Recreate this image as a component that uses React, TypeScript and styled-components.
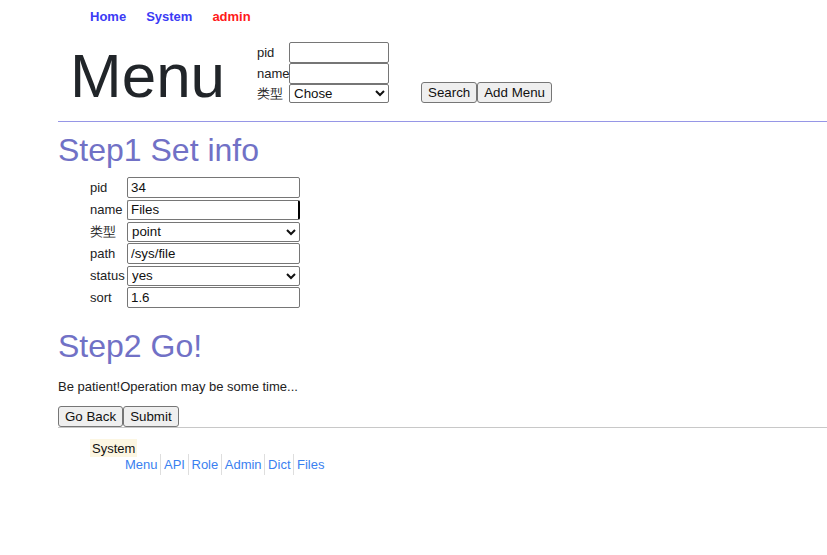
import React from "react";
import styled, { createGlobalStyle } from "styled-components";

const Global = createGlobalStyle`
  html, body { margin: 0; padding: 0; background: #fff; }
  body { font-family: "Liberation Sans", Arial, sans-serif; font-size: 13px; color: #222; }
`;

const Page = styled.div`
  padding-left: 58px;
`;

const Nav = styled.nav`
  display: flex;
  gap: 20px;
  padding: 9px 0 0 32px;
  height: 33px;
  box-sizing: border-box;
`;

const NavLink = styled.a<{ $red?: boolean }>`
  font-weight: bold;
  font-size: 13px;
  line-height: 15px;
  text-decoration: none;
  color: ${(p) => (p.$red ? "#ff1a1a" : "#3b3bf5")};
`;

const Header = styled.div`
  display: flex;
  align-items: flex-start;
  margin-top: 9px;
`;

const Title = styled.h1`
  width: 199px;
  box-sizing: border-box;
  margin: 3px 0 -8px;
  padding-left: 12px;
  font-size: 62px;
  line-height: 62px;
  font-weight: normal;
  color: #212529;
`;

const SearchForm = styled.div`
  display: grid;
  grid-template-columns: 32px 100px;
  grid-template-rows: 21px 21px 19px;
  align-items: center;
`;

const Label = styled.span`
  font-size: 13px;
  line-height: 15px;
  white-space: nowrap;
  color: #222;
`;

const Input = styled.input<{ $caret?: boolean }>`
  box-sizing: border-box;
  width: 100%;
  height: ${(p) => (p.$caret ? "20px" : "21px")};
  margin: 0;
  padding: 1px 3px;
  font-family: "Liberation Sans", Arial, sans-serif;
  font-size: 13.333px;
  color: #111;
  border: 1px solid #767676;
  border-right: ${(p) => (p.$caret ? "2px solid #000" : "1px solid #767676")};
  border-radius: 2px;
  background: #fff;
`;

const Select = styled.select<{ $h?: number }>`
  box-sizing: border-box;
  width: 100%;
  height: ${(p) => p.$h ?? 19}px;
  margin: 0;
  font-family: "Liberation Sans", Arial, sans-serif;
  font-size: 13.333px;
  color: #111;
  border: 1px solid #767676;
  border-radius: 2px;
  background: #fff;
`;

const ButtonGroup = styled.div`
  display: flex;
  margin: 40px 0 0 32px;
`;

const Button = styled.button`
  box-sizing: border-box;
  height: 21px;
  margin: 0;
  padding: 0 6px;
  font-family: "Liberation Sans", Arial, sans-serif;
  font-size: 13.333px;
  color: #111;
  background: #efefef;
  border: 1px solid #767676;
  border-radius: 3px;
`;

const Rule = styled.hr<{ $color: string; $top?: number }>`
  margin: ${(p) => p.$top ?? 0}px 0 0;
  border: 0;
  border-top: 1px solid ${(p) => p.$color};
  height: 0;
`;

const StepTitle = styled.h2<{ $top: number }>`
  margin: ${(p) => p.$top}px 0 0;
  font-size: 32px;
  line-height: 1.15;
  font-weight: normal;
  color: #7171c6;
`;

const InfoForm = styled.div`
  display: grid;
  grid-template-columns: 37px 173px;
  grid-auto-rows: 22px;
  align-items: center;
  margin: 8px 0 0 32px;
`;

const Note = styled.p`
  margin: 14px 0 0;
  font-size: 13px;
  line-height: 15px;
`;

const Actions = styled.div`
  display: flex;
  margin-top: 12px;
`;

const Footer = styled.div`
  padding: 11px 0 0 32px;
`;

const Group = styled.span`
  display: inline-block;
  background: #fcf6e2;
  padding: 2px 2px 1px;
  font-size: 13px;
  line-height: 15px;
  color: #111;
`;

const Links = styled.div`
  display: flex;
  margin-left: 32px;
  margin-top: -3px;
`;

const SubLink = styled.a<{ $first?: boolean }>`
  display: block;
  padding: 0 2.5px 0 3px;
  height: 21px;
  line-height: 21px;
  font-size: 13px;
  text-decoration: none;
  color: #3a7ff0;
  border-left: ${(p) => (p.$first ? "none" : "1px solid #dedede")};
`;

const rows: { label: string; value: string; select?: boolean; caret?: boolean }[] = [
  { label: "pid", value: "34" },
  { label: "name", value: "Files", caret: true },
  { label: "类型", value: "point", select: true },
  { label: "path", value: "/sys/file" },
  { label: "status", value: "yes", select: true },
  { label: "sort", value: "1.6" },
];

const subLinks = ["Menu", "API", "Role", "Admin", "Dict", "Files"];

export default function App() {
  return (
    <Page>
      <Global />
      <Nav>
        <NavLink>Home</NavLink>
        <NavLink>System</NavLink>
        <NavLink $red>admin</NavLink>
      </Nav>
      <Header>
        <Title>Menu</Title>
        <SearchForm>
          <Label>pid</Label>
          <Input defaultValue="" />
          <Label>name</Label>
          <Input defaultValue="" />
          <Label>类型</Label>
          <Select defaultValue="Chose">
            <option>Chose</option>
          </Select>
        </SearchForm>
        <ButtonGroup>
          <Button>Search</Button>
          <Button>Add Menu</Button>
        </ButtonGroup>
      </Header>
      <Rule $color="#9696e6" $top={18} />
      <StepTitle $top={10}>Step1 Set info</StepTitle>
      <InfoForm>
        {rows.map((r) => (
          <React.Fragment key={r.label}>
            <Label>{r.label}</Label>
            {r.select ? (
              <Select $h={20} defaultValue={r.value}>
                <option>{r.value}</option>
              </Select>
            ) : (
              <Input $caret={r.caret} defaultValue={r.value} />
            )}
          </React.Fragment>
        ))}
      </InfoForm>
      <StepTitle $top={19}>Step2 Go!</StepTitle>
      <Note>Be patient!Operation may be some time...</Note>
      <Actions>
        <Button>Go Back</Button>
        <Button>Submit</Button>
      </Actions>
      <Rule $color="#c8c8c8" />
      <Footer>
        <Group>System</Group>
        <Links>
          {subLinks.map((l, i) => (
            <SubLink key={l} $first={i === 0}>
              {l}
            </SubLink>
          ))}
        </Links>
      </Footer>
    </Page>
  );
}
